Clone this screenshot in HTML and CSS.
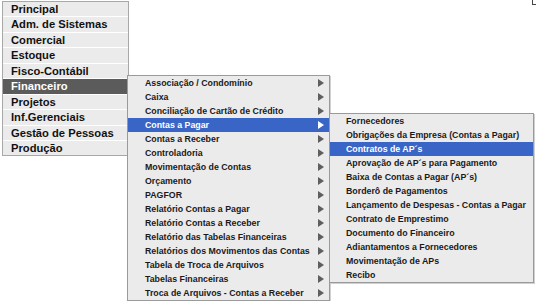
FILE: index.html
```html
<!DOCTYPE html>
<html lang="pt-BR">
<head>
    <meta charset="UTF-8">
    <title>Menu Financeiro</title>
    <link rel="stylesheet" href="styles.css">
</head>
<body>
    <span class="corner"></span>
    <ul class="main-menu">
      <li>Principal</li>
      <li>Adm. de Sistemas</li>
      <li>Comercial</li>
      <li>Estoque</li>
      <li>Fisco-Contábil</li>
      <li class="active">Financeiro</li>
      <li>Projetos</li>
      <li>Inf.Gerenciais</li>
      <li>Gestão de Pessoas</li>
      <li>Produção</li>
    </ul>

    <!-- submenu Financeiro -->
    <ul class="sub-menu level2">
      <li class="has-sub">Associação / Condomínio</li>
      <li class="has-sub">Caixa</li>
      <li class="has-sub">Conciliação de Cartão de Crédito</li>
      <li class="has-sub active">Contas a Pagar</li>
      <li class="has-sub">Contas a Receber</li>
      <li class="has-sub">Controladoria</li>
      <li class="has-sub">Movimentação de Contas</li>
      <li class="has-sub">Orçamento</li>
      <li class="has-sub">PAGFOR</li>
      <li class="has-sub">Relatório Contas a Pagar</li>
      <li class="has-sub">Relatório Contas a Receber</li>
      <li class="has-sub">Relatório das Tabelas Financeiras</li>
      <li class="has-sub">Relatórios dos Movimentos das Contas</li>
      <li class="has-sub">Tabela de Troca de Arquivos</li>
      <li class="has-sub">Tabelas Financeiras</li>
      <li class="has-sub">Troca de Arquivos - Contas a Receber</li>
    </ul>

    <!-- submenu Contas a Pagar -->
    <ul class="sub-menu level3">
      <li>Fornecedores</li>
      <li>Obrigações da Empresa (Contas a Pagar)</li>
      <li class="active">Contratos de AP´s</li>
      <li>Aprovação de AP´s para Pagamento</li>
      <li>Baixa de Contas a Pagar (AP´s)</li>
      <li>Borderô de Pagamentos</li>
      <li>Lançamento de Despesas - Contas a Pagar</li>
      <li>Contrato de Emprestimo</li>
      <li>Documento do Financeiro</li>
      <li>Adiantamentos a Fornecedores</li>
      <li>Movimentação de APs</li>
      <li>Recibo</li>
    </ul>
</body>
</html>
```

FILE: styles.css
```css
body {
  font-family: 'Liberation Sans', Arial, sans-serif;
  background: #fff;
  margin: 0;
  padding: 0;
  position: relative;
  height: 301px;
  overflow: hidden;
}
ul {
  list-style: none;
  margin: 0;
  padding: 0;
}
.corner {
  position: absolute;
  left: 532px;
  top: 0;
  width: 3px;
  height: 4px;
  border-left: 1px solid #444;
  border-bottom: 1px solid #444;
}
.main-menu {
  margin: 1px 0 0 2px;
  width: 125px;
  border: 1px solid #a8a8a8;
  border-bottom: none;
  background: #fff;
}
.main-menu li {
  box-sizing: border-box;
  height: 15.45px;
  line-height: 14.45px;
  padding-left: 8px;
  background: #ebebeb;
  border-bottom: 1px solid #fff;
  font-size: 11.2px;
  font-weight: bold;
  color: #111;
  white-space: nowrap;
}
.main-menu li:last-child {
  border-bottom: 1px solid #a8a8a8;
}
.main-menu li.active {
  background: #5b5b5b;
  color: #fff;
}
.sub-menu {
  position: absolute;
  background: #ebebeb;
  border: 1px solid #9a9a9a;
  box-shadow: 1px 1px 0 #d0d0d0;
}
.sub-menu li {
  position: relative;
  height: 14px;
  line-height: 14px;
  font-size: 8.8px;
  font-weight: bold;
  color: #1a1a1a;
  white-space: nowrap;
}
.sub-menu li.active {
  background: #3865c6;
  color: #fff;
}
.level2 {
  left: 127px;
  top: 75px;
  width: 201px;
}
.level2 li {
  padding-left: 17px;
}
.level3 {
  left: 329px;
  top: 113px;
  width: 203px;
}
.level3 li {
  padding-left: 16px;
}
.has-sub:after {
  content: "";
  position: absolute;
  right: 5px;
  top: 2.5px;
  border-left: 6px solid #5e5e5e;
  border-top: 4.5px solid transparent;
  border-bottom: 4.5px solid transparent;
}
.has-sub.active:after {
  border-left-color: #fff;
}
```
